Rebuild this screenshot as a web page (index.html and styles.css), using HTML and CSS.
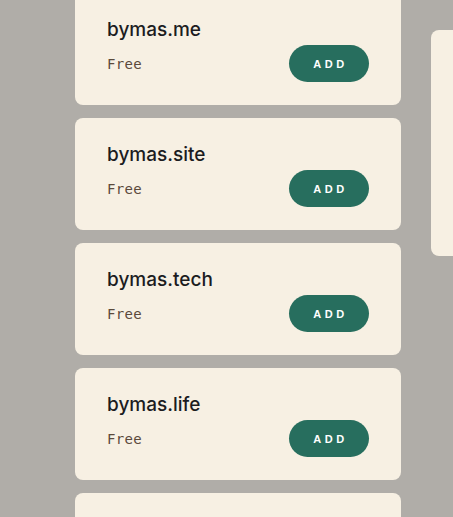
FILE: index.html
```html
<!DOCTYPE html>
<html>
<head>
<meta charset="utf-8">
<link rel="stylesheet" href="styles.css">
</head>
<body>
<div class="page">
  <div class="list">
    <div class="card">
      <div class="name">bymas.me</div>
      <div class="row"><span class="price">Free</span><button class="add">ADD</button></div>
    </div>
    <div class="card">
      <div class="name">bymas.site</div>
      <div class="row"><span class="price">Free</span><button class="add">ADD</button></div>
    </div>
    <div class="card">
      <div class="name">bymas.tech</div>
      <div class="row"><span class="price">Free</span><button class="add">ADD</button></div>
    </div>
    <div class="card">
      <div class="name">bymas.life</div>
      <div class="row"><span class="price">Free</span><button class="add">ADD</button></div>
    </div>
    <div class="card"></div>
  </div>
  <div class="side"></div>
</div>
</body>
</html>
```
FILE: styles.css
```css
html, body {
  margin: 0;
  padding: 0;
  background: #b0ada8;
  overflow: hidden;
  height: 517px;
}
.page {
  display: flex;
  align-items: flex-start;
  padding-left: 75px;
  gap: 30px;
  width: 500px;
}
.list {
  width: 326px;
  flex: none;
  display: flex;
  flex-direction: column;
  gap: 13px;
  margin-top: -7px;
}
.card {
  background: #f7f0e3;
  border-radius: 8px;
  height: 112px;
  box-sizing: border-box;
  padding: 24px 32px 0 32px;
}
.name {
  font-family: Inter, "Open Sans", sans-serif;
  font-size: 19px;
  font-weight: 500;
  color: #1c1c1f;
  line-height: 26px;
}
.row {
  display: flex;
  justify-content: space-between;
  align-items: center;
  margin-top: 2px;
}
.price {
  font-family: "DejaVu Sans Mono", monospace;
  font-size: 14px;
  color: #5b4a3c;
  letter-spacing: 0.3px;
}
.add {
  width: 80px;
  height: 37px;
  border: none;
  border-radius: 19px;
  background: #276e5e;
  color: #fff;
  font-family: "Liberation Sans", Arial, sans-serif;
  font-weight: bold;
  font-size: 11px;
  letter-spacing: 3.5px;
  padding: 0 0 0 3px;
}
.side {
  flex: none;
  width: 60px;
  height: 226px;
  margin-top: 30px;
  background: #f7f0e3;
  border-radius: 8px;
}
```
